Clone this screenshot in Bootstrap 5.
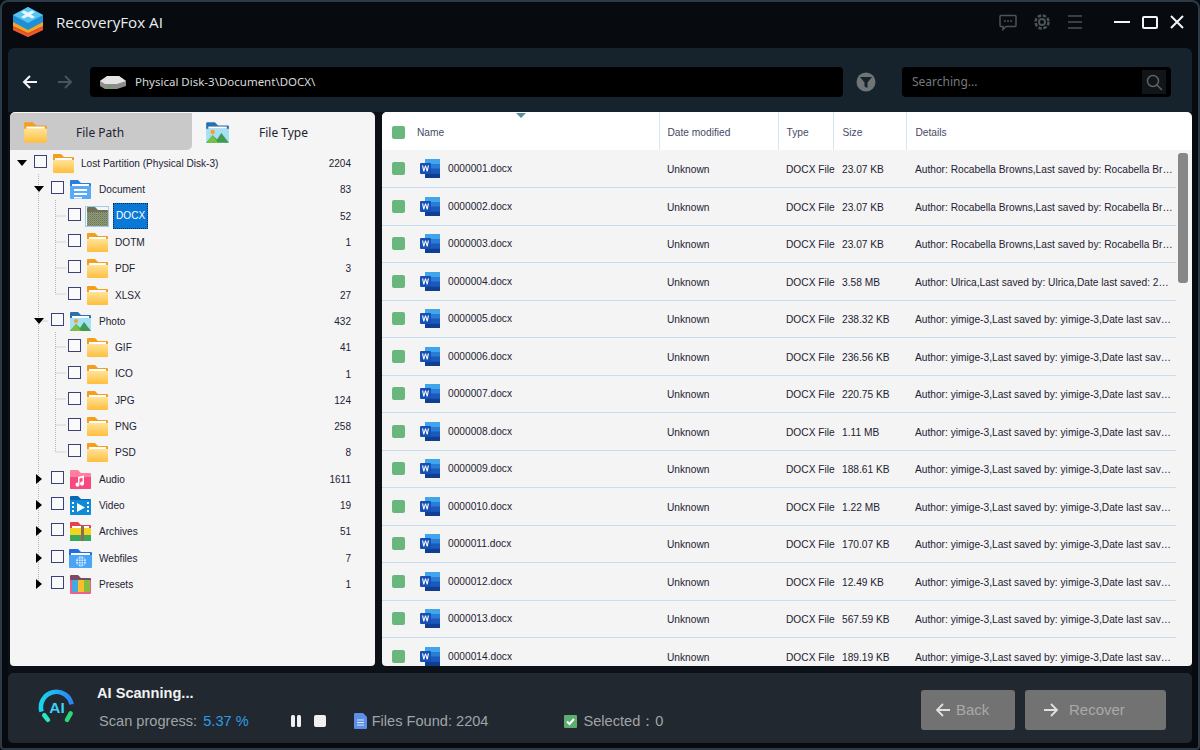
<!DOCTYPE html>
<html lang="en">
<head>
  <meta charset="UTF-8">
  <meta name="viewport" content="width=device-width, initial-scale=1.0">
  <title>RecoveryFox AI</title>
  <link href="https://cdn.jsdelivr.net/npm/bootstrap@5.3.0/dist/css/bootstrap.min.css" rel="stylesheet">
  <style>
    html, body { height: 100%; }
    body { background: #070b0f; font-family: "Liberation Sans", "Noto Sans", sans-serif; font-size: 10px; color: #1d2233; overflow: hidden; }
    .app-window { width: 1200px; height: 750px; border: 2px solid #2c3a48; border-radius: 8px 8px 4px 4px; background: #070b0f; padding: 0 6px 5px 6px; }

    .title-bar { height: 46px; color: #e9edf0; padding-bottom: 6px; }
    .app-name { font-size: 15.2px; margin-left: 12px; font-family: "Open Sans", sans-serif; }
    .tool-ico { color: #4b5358; }
    .win-ico { color: #f2f4f5; }

    .nav-bar { height: 64px; background: #17232c; border-radius: 6px 6px 0 0; padding: 4px 21px 0 0; }
    .back-arrow { width: 26px; height: 26px; margin-left: 9px; }
    .path-box { width: 753px; height: 30px; background: #000; border-radius: 4px; color: #d8dadb; font-size: 11.5px; font-family: "Noto Sans", sans-serif; padding-left: 9px; margin-left: 12px; }
    .search-box { width: 269px; height: 30px; background: #000; border-radius: 4px; color: #76797b; font-size: 12px; font-family: "Noto Sans", sans-serif; padding-left: 10px; margin-left: 26px; }
    .search-btn { width: 24px; height: 24px; background: #0f1519; margin-right: 5px; }

    .work-area { height: 561px; background: #0b1116; gap: 7px; padding: 0 0 7px 2px; }
    .tree-panel { width: 365px; background: #f5f5f5; border-radius: 5px 5px 4px 4px; overflow: hidden; position: relative; flex: none; }
    .tab-row { height: 38px; font-size: 12px; font-family: "Noto Sans", sans-serif; padding-top: 1px; }
    .tab-item { width: 182px; height: 37px; padding-left: 12px; color: #1d2233; }
    .tab-item.tab-off { background: #c9c9c9; border-radius: 5px 0 5px 0; }
    .tab-item span { margin-left: 28px; padding-top: 2px; }
    .tab-item + .tab-item span { margin-left: 29px; }
    .tree-row { height: 26.3px; position: relative; }
    .tree-row .tw { width: 12px; flex: none; display: flex; justify-content: center; margin-right: 2px; }
    .tree-row .cnt { position: absolute; left: 317px; width: 24px; text-align: right; padding-top: 1px; }
    .lvl0 { padding-left: 6px; }
    .lvl1 { padding-left: 23px; }
    .lvl2 { padding-left: 58px; }
    .box { width: 13px; height: 13px; border: 1.5px solid #3b4279; background: #fafafa; flex: none; margin-left: 4px; margin-bottom: 3px; }
    .lvl2 .box { margin-left: 0; }
    .tree-ico { width: 24px; height: 22px; flex: none; margin: 0 6px 0 4px; }
    .lvl1 .tree-ico { margin-right: 7px; }
    .tree-name { white-space: nowrap; padding-top: 1px; font-size: 10.1px; }
    .tree-name.active { background: #0a78d7; color: #fff; border: 1px dotted #0a2a55; padding: 0 2px; height: 26px; line-height: 24px; margin-left: -2px; }
    .tree-lines { position: absolute; left: 0; top: 38px; pointer-events: none; }

    .list-panel { flex: 1; background: linear-gradient(#fff 38px, #f4f4f4 38px); border-radius: 5px 5px 4px 4px; overflow: hidden; position: relative; }
    .file-table { table-layout: fixed; width: 794px; margin: 0; font-size: 10.2px; --bs-table-bg: transparent; --bs-table-color: #1d2233; }
    .file-table th { height: 38px; background: #fff; font-weight: 400; color: #454a66; padding: 3px 0 0 8px; vertical-align: middle; border-bottom: 0; border-right: 1px solid #d3e8f3; }
    .file-table th:first-child, .file-table th:nth-child(2) { padding: 3px 0 0; }
    .file-table th:first-child { border-right: 0; }
    .file-table th:last-child { border-right: 0; }
    .file-table td { height: 37.5px; padding: 2px 0 0 8px; vertical-align: middle; border-bottom: 1px solid #c7dcf1; white-space: nowrap; }
    .file-table td:first-child { padding: 0 0 0 10px; }
    .file-table td:nth-child(2) { padding: 0; }
    .file-table td:nth-child(n+5) { padding-left: 9px; }
    .file-table th:nth-child(n+5) { padding-left: 9px; }
    .green-box { display: block; width: 13px; height: 13px; background: #69b77d; border-radius: 2px; }
    .file-table th:first-child .green-box { margin-left: 10px; }
    .word-ico { width: 22px; height: 21px; margin: 0 7px 0 9px; flex: none; }
    .sort-mark { position: absolute; left: 134px; top: 1px; width: 0; height: 0; border-left: 5px solid transparent; border-right: 5px solid transparent; border-top: 5px solid #5c8f9c; }
    .name-head { padding-left: 7px !important; }
    .scroll-thumb { position: absolute; right: 4px; top: 41px; width: 10px; height: 130px; background: #878787; border-radius: 3px; }

    .status-bar { height: 70px; background: #22282f; border-radius: 5px; padding: 0 26px 0 29px; color: #a1a4a7; font-size: 14px; position: relative; }
    .scan-title { color: #f0f1f2; font-weight: 700; font-size: 14.6px; line-height: 18px; }
    .scan-line { font-size: 14.6px; line-height: 18px; margin-top: 10px; margin-bottom: 2px; }
    .pct { color: #2e9bea; margin-left: 2px; }
    .action-btn { height: 40px; background: #727272; border: 0; border-radius: 3px; color: #a9a9a9; font-size: 15px; padding: 0; margin-top: 4px; }
    .action-btn:disabled { background: #727272; color: #a9a9a9; opacity: 1; }
    .ctl-ico { width: 12px; height: 12px; background: #f0f0f0; border-radius: 2px; }
  </style>
</head>
<body>
  <svg width="0" height="0" class="position-absolute">
    <defs>
      <linearGradient id="gFold" x1="0" y1="0" x2="0" y2="1"><stop offset="0" stop-color="#ffe39a"/><stop offset="1" stop-color="#ffbe3c"/></linearGradient>
      <pattern id="pDither" width="2" height="2" patternUnits="userSpaceOnUse"><rect width="2" height="2" fill="#a89a55"/><rect width="1" height="1" fill="#4f8fc0"/><rect x="1" y="1" width="1" height="1" fill="#6d7250"/></pattern>
      <symbol id="i-folder" viewBox="0 0 24 22">
        <path d="M2 3q0-1 1-1h7l3 3h9q1 0 1 1v3H2z" fill="#f59e1b"/><rect x="4" y="6" width="17" height="2" fill="#fff"/>
        <path d="M2 8h21v12q0 1-1 1H3q-1 0-1-1z" fill="url(#gFold)"/>
      </symbol>
      <symbol id="i-folder-sel" viewBox="0 0 24 22">
        <path d="M2 3q0-1 1-1h7l3 3h9q1 0 1 1v3H2z" fill="#6f7158"/>
        <path d="M2 7h21v14H2z" fill="url(#pDither)"/>
        <rect x=".5" y="1.500" width="23" height="20" fill="none" stroke="#4aa0e0" stroke-dasharray="1 1"/>
      </symbol>
      <symbol id="i-doc" viewBox="0 0 24 22">
        <path d="M2 3q0-1 1-1h7l3 3h9q1 0 1 1v3H2z" fill="#2a7de1"/><rect x="4" y="6" width="17" height="2" fill="#fff"/>
        <path d="M2 8h21v12q0 1-1 1H3q-1 0-1-1z" fill="#5aa9f6"/>
        <path d="M6 11h13v2H6zM6 15h13v2H6zM6 19h8v1.500H6z" fill="#fff"/>
      </symbol>
      <symbol id="i-photo" viewBox="0 0 24 22">
        <path d="M2 3q0-1 1-1h7l3 3h9q1 0 1 1v3H2z" fill="#2c6fae"/><rect x="4" y="6" width="17" height="2" fill="#fff"/>
        <rect x="2" y="8" width="21" height="13" fill="#a6e0f5"/><circle cx="8" cy="11" r="2" fill="#f6a21e"/>
        <path d="M2 21l6-7 4 4 4-6 7 9z" fill="#3f9b4d"/><path d="M2 21l6-7 5 7z" fill="#7ac143"/>
      </symbol>
      <symbol id="i-audio" viewBox="0 0 24 22">
        <path d="M2 3q0-1 1-1h7l3 3h9q1 0 1 1v14q0 1-1 1H3q-1 0-1-1z" fill="#ff7f9f"/>
        <path d="M2 9h21v11q0 1-1 1H3q-1 0-1-1z" fill="#f9497f"/>
        <path d="M10 9l6-1.500v8a2 2 0 1 1-1.500-1.800v-4l-3 .8v6a2 2 0 1 1-1.500-1.800z" fill="#fff"/>
      </symbol>
      <symbol id="i-video" viewBox="0 0 24 22">
        <path d="M2 3q0-1 1-1h7l3 3h9q1 0 1 1v3H2z" fill="#0a67b4"/><rect x="2" y="6" width="21" height="15" rx="1" fill="#0e8ad8"/>
        <path d="M9 9l8 4.500-8 4.500z" fill="#fff"/>
        <path d="M4 8h2v2H4zM4 12h2v2H4zM4 16h2v2H4zM19 8h2v2h-2zM19 12h2v2h-2zM19 16h2v2h-2z" fill="#fff"/>
      </symbol>
      <symbol id="i-archive" viewBox="0 0 24 22">
        <path d="M2 3q0-1 1-1h7l3 3h9q1 0 1 1v3H2z" fill="#e3414f"/><rect x="4" y="6" width="17" height="2" fill="#fff"/>
        <rect x="2" y="8" width="21" height="7" fill="#f3d321"/><rect x="2" y="15" width="21" height="6" fill="#38a85a"/>
        <rect x="13" y="6" width="3" height="15" fill="#8c6b4f"/>
      </symbol>
      <symbol id="i-web" viewBox="0 0 24 22">
        <path d="M1 3q0-1 1-1h8l3 3h10q1 0 1 1v3H1z" fill="#1f6fe0"/><rect x="3" y="6" width="19" height="2" fill="#fff"/>
        <path d="M1 8h23v12q0 1-1 1H2q-1 0-1-1z" fill="#4ba4f5"/>
        <circle cx="13" cy="14.500" r="5" fill="#d5ecff"/><path d="M8 14.500h10M8.800 12h8.400M8.800 17h8.400M13 9.500v10M10.500 10v9M15.500 10v9" stroke="#4ba4f5" stroke-width=".8"/>
      </symbol>
      <symbol id="i-preset" viewBox="0 0 24 22">
        <path d="M2 3q0-1 1-1h7l3 3h9q1 0 1 1v3H2z" fill="#7c4a64"/>
        <rect x="2" y="7" width="21" height="14" rx="1" fill="#ea5f94"/>
        <rect x="4" y="7" width="6" height="12" fill="#46a8de"/><rect x="10" y="7" width="6" height="12" fill="#f5c02c"/><rect x="16" y="7" width="6" height="12" fill="#86bd3f"/>
      </symbol>
      <symbol id="i-word" viewBox="0 0 22 21">
        <path d="M6 1h14q1 0 1 1v17q0 1-1 1H6z" fill="#2b7cd3"/><rect x="6" y="1" width="15" height="5" fill="#41a5ee"/>
        <rect x="6" y="10.500" width="15" height="5" fill="#185abd"/><rect x="6" y="15.500" width="15" height="4.500" fill="#103f91"/>
        <rect x="1" y="5" width="11" height="11" rx="1" fill="#1650b4"/>
        <path d="M3 7.500l1.300 6h1l1.200-4.200 1.200 4.200h1l1.300-6H8.800l-.7 3.700L7 7.500H6l-1.100 3.700-.7-3.700z" fill="#fff"/>
      </symbol>
    </defs>
  </svg>

  <div class="app-window d-flex flex-column">
    <!-- Title bar -->
    <div class="title-bar d-flex align-items-center">
      <svg width="32" height="32" viewBox="0 0 32 32" class="ms-1">
        <path d="M16 11L31 19v5L16 31 1 24v-5z" fill="#d9472b"/><path d="M1 21l15 7 15-7v3L16 31 1 24z" fill="#e8592a"/>
        <path d="M1 14L16 7l15 7v6L16 27 1 20z" fill="#f5a623"/>
        <path d="M1 9L16 1l15 8v7l-15 8-15-8z" fill="#1f8fd8"/><path d="M16 1l15 8-15 8L1 9z" fill="#56c3f0"/>
        <path d="M9 6l3-1.500 4 2 4-2L23 6l-4 2.500L23 11l-3 1.500-4-2-4 2L9 11l4-2.500z" fill="#e8f6fd"/>
      </svg>
      <span class="app-name">RecoveryFox AI</span>
      <div class="ms-auto d-flex align-items-center tool-ico">
        <svg width="18" height="17" viewBox="0 0 18 17" fill="none" stroke="currentColor" stroke-width="1.500"><path d="M2 1.500h14q1 0 1 1v9q0 1-1 1H7l-3 3v-3H2q-1 0-1-1v-9q0-1 1-1z"/><path d="M5 7h2M8 7h2M11 7h2" stroke-width="1.600"/></svg>
        <svg class="ms-3" width="18" height="18" viewBox="0 0 18 18" fill="none" stroke="currentColor"><circle cx="9" cy="9" r="3" stroke-width="2"/><circle cx="9" cy="9" r="6.500" stroke-width="2.500" stroke-dasharray="3.500 1.600"/></svg>
        <svg class="ms-3" width="16" height="16" viewBox="0 0 16 16" stroke="currentColor" stroke-width="1.500"><path d="M1 2h14M1 8h14M1 14h14"/></svg>
        <div class="win-ico d-flex align-items-center" style="gap:12px;margin-left:31px">
          <svg width="16" height="16" viewBox="0 0 16 16" stroke="currentColor" stroke-width="2"><path d="M0 8h16"/></svg>
          <svg width="16" height="13" viewBox="0 0 16 13" fill="none" stroke="currentColor" stroke-width="2"><rect x="1" y="1" width="14" height="11" rx="1"/></svg>
          <svg class="me-2" width="14" height="14" viewBox="0 0 14 14" stroke="currentColor" stroke-width="2"><path d="M1 1l12 12M13 1L1 13"/></svg>
        </div>
      </div>
    </div>

    <!-- Navigation bar -->
    <div class="nav-bar d-flex align-items-center">
      <div class="back-arrow d-flex align-items-center justify-content-center">
        <svg width="16" height="16" viewBox="0 0 16 16" fill="none" stroke="#f2f4f5" stroke-width="2"><path d="M15 8H2M8 2L2 8l6 6"/></svg>
      </div>
      <div class="back-arrow d-flex align-items-center justify-content-center" style="margin-left:9px">
        <svg width="16" height="16" viewBox="0 0 16 16" fill="none" stroke="#4b5358" stroke-width="2"><path d="M1 8h13M8 2l6 6-6 6"/></svg>
      </div>
      <div class="path-box d-flex align-items-center">
        <svg width="28" height="16" viewBox="0 0 28 16">
          <path d="M1 7l8-5h11l7 5v5l-9 3H6l-5-3z" fill="#8d8d8d"/><path d="M1 7l7-5h12l7 5-9 3H6z" fill="#e4e4e4"/>
          <rect x="9" y="12" width="3" height="1.500" fill="#29c24a"/>
        </svg>
        <span class="ms-2">Physical Disk-3\Document\DOCX\</span>
      </div>
      <svg class="ms-auto" width="20" height="20" viewBox="0 0 20 20">
        <circle cx="10" cy="10" r="9.500" fill="#6f7477"/><path d="M4 5h12l-4.500 5.500V16l-3-1.500v-4z" fill="#17232c"/>
      </svg>
      <div class="search-box d-flex align-items-center justify-content-between">
        <span>Searching...</span>
        <div class="search-btn d-flex align-items-center justify-content-center">
          <svg width="17" height="17" viewBox="0 0 17 17" fill="none" stroke="#5c6266" stroke-width="1.500"><circle cx="7" cy="7" r="5.500"/><path d="M11 11l5 5"/></svg>
        </div>
      </div>
    </div>

    <!-- Tree and file list -->
    <div class="work-area d-flex">
      <div class="tree-panel">
        <div class="tab-row d-flex">
          <div class="tab-item tab-off d-flex align-items-center"><svg width="26" height="24"><use href="#i-folder"/></svg><span>File Path</span></div>
          <div class="tab-item d-flex align-items-center"><svg width="26" height="24"><use href="#i-photo"/></svg><span>File Type</span></div>
        </div>
        <svg class="tree-lines" width="80" height="450" stroke="#b5b5b5" stroke-dasharray="1 1" fill="none">
          <path d="M28.500 24V432M45.500 50V144M45.500 182V302M28.500 171H38M45.500 66H56M45.500 92H56M45.500 118H56M45.500 144H56M45.500 197H56M45.500 223H56M45.500 249H56M45.500 275H56M45.500 302H56"/>
        </svg>
        <div class="tree-row lvl0 d-flex align-items-center"><span class="tw"><svg width="10" height="6"><path d="M0 0h10L5 6z"/></svg></span><span class="box"></span><svg class="tree-ico"><use href="#i-folder"/></svg><span class="tree-name">Lost Partition (Physical Disk-3)</span><span class="cnt">2204</span></div>
        <div class="tree-row lvl1 d-flex align-items-center"><span class="tw"><svg width="10" height="6"><path d="M0 0h10L5 6z"/></svg></span><span class="box"></span><svg class="tree-ico"><use href="#i-doc"/></svg><span class="tree-name">Document</span><span class="cnt">83</span></div>
        <div class="tree-row lvl2 d-flex align-items-center"><span class="box"></span><svg class="tree-ico"><use href="#i-folder-sel"/></svg><span class="tree-name active">DOCX</span><span class="cnt">52</span></div>
        <div class="tree-row lvl2 d-flex align-items-center"><span class="box"></span><svg class="tree-ico"><use href="#i-folder"/></svg><span class="tree-name">DOTM</span><span class="cnt">1</span></div>
        <div class="tree-row lvl2 d-flex align-items-center"><span class="box"></span><svg class="tree-ico"><use href="#i-folder"/></svg><span class="tree-name">PDF</span><span class="cnt">3</span></div>
        <div class="tree-row lvl2 d-flex align-items-center"><span class="box"></span><svg class="tree-ico"><use href="#i-folder"/></svg><span class="tree-name">XLSX</span><span class="cnt">27</span></div>
        <div class="tree-row lvl1 d-flex align-items-center"><span class="tw"><svg width="10" height="6"><path d="M0 0h10L5 6z"/></svg></span><span class="box"></span><svg class="tree-ico"><use href="#i-photo"/></svg><span class="tree-name">Photo</span><span class="cnt">432</span></div>
        <div class="tree-row lvl2 d-flex align-items-center"><span class="box"></span><svg class="tree-ico"><use href="#i-folder"/></svg><span class="tree-name">GIF</span><span class="cnt">41</span></div>
        <div class="tree-row lvl2 d-flex align-items-center"><span class="box"></span><svg class="tree-ico"><use href="#i-folder"/></svg><span class="tree-name">ICO</span><span class="cnt">1</span></div>
        <div class="tree-row lvl2 d-flex align-items-center"><span class="box"></span><svg class="tree-ico"><use href="#i-folder"/></svg><span class="tree-name">JPG</span><span class="cnt">124</span></div>
        <div class="tree-row lvl2 d-flex align-items-center"><span class="box"></span><svg class="tree-ico"><use href="#i-folder"/></svg><span class="tree-name">PNG</span><span class="cnt">258</span></div>
        <div class="tree-row lvl2 d-flex align-items-center"><span class="box"></span><svg class="tree-ico"><use href="#i-folder"/></svg><span class="tree-name">PSD</span><span class="cnt">8</span></div>
        <div class="tree-row lvl1 d-flex align-items-center"><span class="tw"><svg width="6" height="10"><path d="M0 0v10l6-5z"/></svg></span><span class="box"></span><svg class="tree-ico"><use href="#i-audio"/></svg><span class="tree-name">Audio</span><span class="cnt">1611</span></div>
        <div class="tree-row lvl1 d-flex align-items-center"><span class="tw"><svg width="6" height="10"><path d="M0 0v10l6-5z"/></svg></span><span class="box"></span><svg class="tree-ico"><use href="#i-video"/></svg><span class="tree-name">Video</span><span class="cnt">19</span></div>
        <div class="tree-row lvl1 d-flex align-items-center"><span class="tw"><svg width="6" height="10"><path d="M0 0v10l6-5z"/></svg></span><span class="box"></span><svg class="tree-ico"><use href="#i-archive"/></svg><span class="tree-name">Archives</span><span class="cnt">51</span></div>
        <div class="tree-row lvl1 d-flex align-items-center"><span class="tw"><svg width="6" height="10"><path d="M0 0v10l6-5z"/></svg></span><span class="box"></span><svg class="tree-ico"><use href="#i-web"/></svg><span class="tree-name">Webfiles</span><span class="cnt">7</span></div>
        <div class="tree-row lvl1 d-flex align-items-center"><span class="tw"><svg width="6" height="10"><path d="M0 0v10l6-5z"/></svg></span><span class="box"></span><svg class="tree-ico"><use href="#i-preset"/></svg><span class="tree-name">Presets</span><span class="cnt">1</span></div>
      </div>

      <div class="list-panel">
        <span class="sort-mark"></span>
        <table class="table file-table">
          <colgroup><col style="width:28px"><col style="width:249px"><col style="width:119px"><col style="width:55px"><col style="width:73px"><col></colgroup>
          <thead>
            <tr><th><span class="green-box"></span></th><th class="name-head">Name</th><th>Date modified</th><th>Type</th><th>Size</th><th>Details</th></tr>
          </thead>
          <tbody id="file-rows"></tbody>
        </table>
        <div class="scroll-thumb"></div>
      </div>
    </div>

    <!-- Status bar -->
    <div class="status-bar d-flex align-items-center">
      <svg width="40" height="40" viewBox="0 0 44 44" class="flex-none">
        <defs><linearGradient id="gAi" x1="0" y1="0" x2="1" y2="0"><stop offset="0" stop-color="#19d4f0"/><stop offset="1" stop-color="#2a86f5"/></linearGradient></defs>
        <path d="M5 26A17 17 0 1 1 38 18" fill="none" stroke="url(#gAi)" stroke-width="5"/>
        <path d="M8 30l4 5" stroke="#2ce6c0" stroke-width="5" stroke-linecap="round"/>
        <path d="M37 28l-4 7" stroke="#27d97c" stroke-width="5" stroke-linecap="round"/>
        <text x="22" y="28" text-anchor="middle" font-family="Liberation Sans, sans-serif" font-weight="700" font-size="17" fill="#3fd0f5">AI</text>
      </svg>
      <div style="margin-left:20px">
        <div class="scan-title">AI Scanning...</div>
        <div class="scan-line d-flex align-items-center">
          <span style="margin-left:2px">Scan progress: <span class="pct">5.37 %</span></span>
          <svg width="12" height="12" viewBox="0 0 12 12" style="margin-left:41px"><rect x="1" width="4" height="12" rx="1.500" fill="#f0f0f0"/><rect x="7" width="4" height="12" rx="1.500" fill="#f0f0f0"/></svg>
          <span class="ctl-ico" style="margin-left:12px"></span>
          <svg width="13" height="16" viewBox="0 0 13 16" style="margin-left:28px"><path d="M0 1q0-1 1-1h8l4 4v11q0 1-1 1H1q-1 0-1-1z" fill="#5d8fe6"/><path d="M3 7h7M3 9.500h7M3 12h7" stroke="#d8e6fb"/></svg>
          <span style="margin-left:5px">Files Found: 2204</span>
          <svg width="13" height="13" viewBox="0 0 13 13" style="margin-left:76px"><rect width="13" height="13" rx="1" fill="#5cad70"/><path d="M3 6.500l2.500 2.500L10 4" fill="none" stroke="#fff" stroke-width="2"/></svg>
          <span style="margin-left:6px">Selected：0</span>
        </div>
      </div>
      <div class="ms-auto d-flex" style="gap:10px">
        <button class="btn action-btn d-flex align-items-center" style="width:94px" disabled>
          <svg width="15" height="14" viewBox="0 0 15 14" fill="none" stroke="#e0e0e0" stroke-width="1.800" style="margin-left:14px"><path d="M15 7H2M8 1L2 7l6 6"/></svg>
          <span style="margin-left:6px">Back</span>
        </button>
        <button class="btn action-btn d-flex align-items-center" style="width:141px" disabled>
          <svg width="15" height="14" viewBox="0 0 15 14" fill="none" stroke="#e0e0e0" stroke-width="1.800" style="margin-left:19px"><path d="M0 7h13M7 1l6 6-6 6"/></svg>
          <span style="margin-left:10px">Recover</span>
        </button>
      </div>
    </div>
  </div>

  <script src="https://cdn.jsdelivr.net/npm/bootstrap@5.3.0/dist/js/bootstrap.bundle.min.js"></script>
  <script>
    const rocabella = 'Author: Rocabella Browns,Last saved by: Rocabella Br…';
    const ulrica = 'Author: Ulrica,Last saved by: Ulrica,Date last saved: 2…';
    const yimige = 'Author: yimige-3,Last saved by: yimige-3,Date last sav…';
    const files = [
      ['23.07 KB', rocabella], ['23.07 KB', rocabella], ['23.07 KB', rocabella], ['3.58 MB', ulrica],
      ['238.32 KB', yimige], ['236.56 KB', yimige], ['220.75 KB', yimige], ['1.11 MB', yimige],
      ['188.61 KB', yimige], ['1.22 MB', yimige], ['170.07 KB', yimige], ['12.49 KB', yimige],
      ['567.59 KB', yimige], ['189.19 KB', yimige]
    ];

    document.getElementById('file-rows').innerHTML = files.map((f, i) => `
      <tr>
        <td><span class="green-box"></span></td>
        <td><div class="d-flex align-items-center"><svg class="word-ico"><use href="#i-word"/></svg><span>${String(i + 1).padStart(7, '0')}.docx</span></div></td>
        <td>Unknown</td>
        <td>DOCX File</td>
        <td>${f[0]}</td>
        <td>${f[1]}</td>
      </tr>`).join('');
  </script>
</body>
</html>
